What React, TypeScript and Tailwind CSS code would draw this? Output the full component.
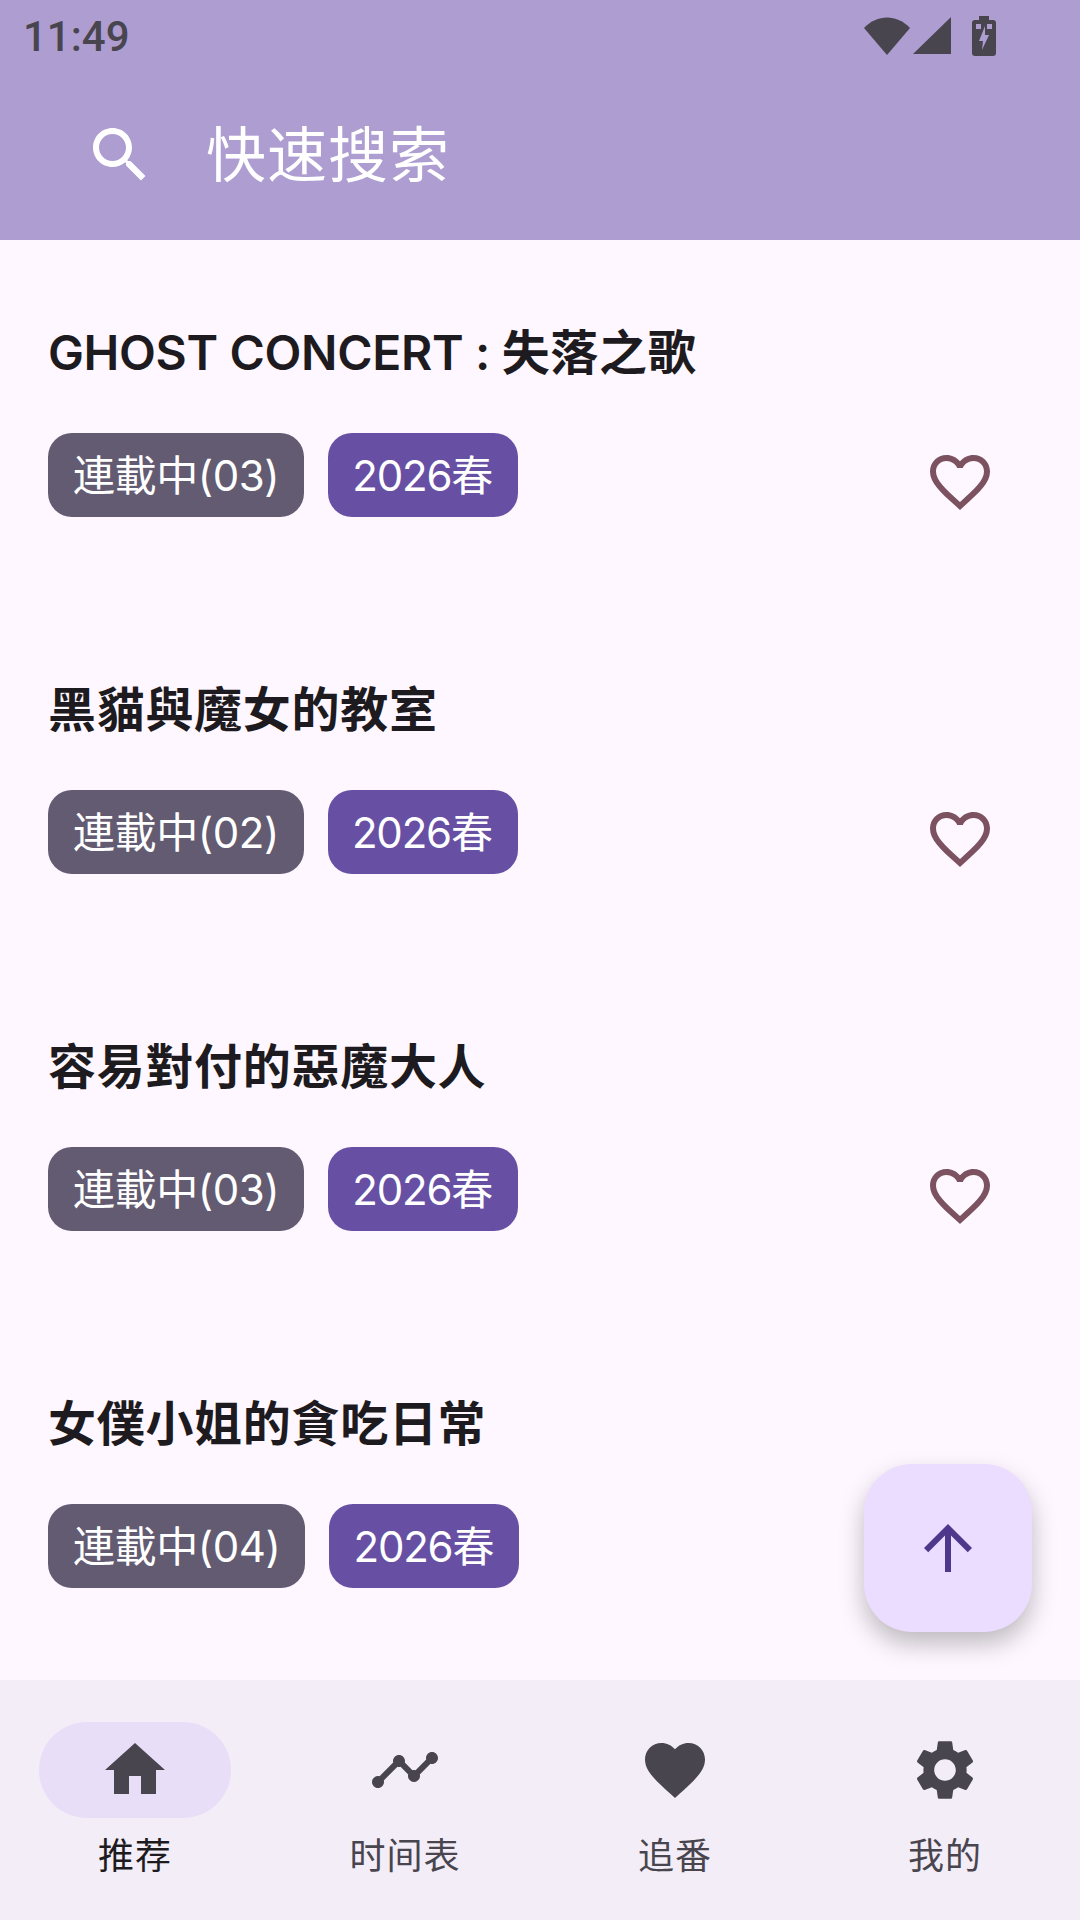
import React from 'react';

const ICONS = {
  search: "M15.5 14h-.79l-.28-.27C15.41 12.59 16 11.11 16 9.5 16 5.91 13.09 3 9.5 3S3 5.91 3 9.5 5.91 16 9.5 16c1.61 0 3.09-.59 4.23-1.57l.27.28v.79l5 4.99L20.49 19l-4.99-5zm-6 0C7.01 14 5 11.99 5 9.5S7.01 5 9.5 5 14 7.01 14 9.5 11.99 14 9.5 14z",
  favoriteBorder: "M16.5 3c-1.74 0-3.41.81-4.5 2.09C10.91 3.81 9.24 3 7.5 3 4.42 3 2 5.42 2 8.5c0 3.78 3.4 6.86 8.55 11.54L12 21.35l1.45-1.32C18.6 15.36 22 12.28 22 8.5 22 5.42 19.58 3 16.5 3zm-4.4 15.55l-.1.1-.1-.1C7.14 14.24 4 11.39 4 8.5 4 6.5 5.5 5 7.5 5c1.54 0 3.04.99 3.57 2.36h1.87C13.46 5.99 14.96 5 16.5 5c2 0 3.5 1.5 3.5 3.5 0 2.89-3.14 5.74-7.9 10.05z",
  favorite: "M12 21.35l-1.45-1.32C5.4 15.36 2 12.28 2 8.5 2 5.42 4.42 3 7.5 3c1.74 0 3.41.81 4.5 2.09C13.09 3.81 14.76 3 16.5 3 19.58 3 22 5.42 22 8.5c0 3.78-3.4 6.86-8.55 11.54L12 21.35z",
  home: "M10 20v-6h4v6h5v-8h3L12 3 2 12h3v8z",
  timeline: "M23 8c0 1.1-.9 2-2 2-.18 0-.35-.02-.51-.07l-3.56 3.55c.05.16.07.34.07.52 0 1.1-.9 2-2 2s-2-.9-2-2c0-.18.02-.36.07-.52l-2.55-2.55c-.16.05-.34.07-.52.07s-.36-.02-.52-.07l-4.55 4.56c.05.16.07.33.07.51 0 1.1-.9 2-2 2s-2-.9-2-2 .9-2 2-2c.18 0 .35.02.51.07l4.56-4.55C8.02 9.36 8 9.18 8 9c0-1.1.9-2 2-2s2 .9 2 2c0 .18-.02.36-.07.52l2.55 2.55c.16-.05.34-.07.52-.07s.36.02.52.07l3.55-3.56C19.02 8.35 19 8.18 19 8c0-1.1.9-2 2-2s2 .9 2 2z",
  settings: "M19.14 12.94c.04-.3.06-.61.06-.94 0-.32-.02-.64-.07-.94l2.03-1.58c.18-.14.23-.41.12-.61l-1.92-3.32c-.12-.22-.37-.29-.59-.22l-2.39.96c-.5-.38-1.03-.7-1.62-.94l-.36-2.54c-.04-.24-.24-.41-.48-.41h-3.84c-.24 0-.43.17-.47.41l-.36 2.54c-.59.24-1.13.57-1.62.94l-2.39-.96c-.22-.08-.47 0-.59.22L2.74 8.87c-.12.21-.08.47.12.61l2.03 1.58c-.05.3-.09.63-.09.94s.02.64.07.94l-2.03 1.58c-.18.14-.23.41-.12.61l1.92 3.32c.12.22.37.29.59.22l2.39-.96c.5.38 1.03.7 1.62.94l.36 2.54c.05.24.24.41.48.41h3.84c.24 0 .44-.17.47-.41l.36-2.54c.59-.24 1.13-.56 1.62-.94l2.39.96c.22.08.47 0 .59-.22l1.92-3.32c.12-.22.07-.47-.12-.61l-2.01-1.58zM12 15.6c-1.98 0-3.6-1.62-3.6-3.6s1.62-3.6 3.6-3.6 3.6 1.62 3.6 3.6-1.62 3.6-3.6 3.6z",
  arrowUp: "M4 12l1.41 1.41L11 7.83V20h2V7.83l5.58 5.59L20 12l-8-8-8 8z",
};

const Icon = ({ d, className }: { d: string; className: string }) => (
  <svg viewBox="0 0 24 24" fill="currentColor" className={className}>
    <path d={d} />
  </svg>
);

const StatusIcons = () => (
  <div className="flex items-center text-[#49454F]">
    <svg viewBox="0 0 46 38" className="w-[46px] h-[38px]" fill="currentColor">
      <path d="M0 11 C13 -3 33 -3 46 11 L23 38 Z" />
    </svg>
    <svg viewBox="0 0 38 38" className="w-[38px] h-[38px] ml-[3px]" fill="currentColor">
      <path d="M38 0 V37 H0 Z" />
    </svg>
    <svg viewBox="0 0 24 40" className="w-[24px] h-[40px] ml-[21px]" fill="currentColor">
      <path fillRule="evenodd" d="M7 0 H17 V4 H21 Q24 4 24 7 V37 Q24 40 21 40 H3 Q0 40 0 37 V7 Q0 4 3 4 H7 Z M4 8 V13 H9 V8 Z M15 8 V13 H20 V8 Z M13 10 L7 25 H11 L10 34 L17 19 H13 Z" />
    </svg>
  </div>
);

const animeList = [
  { latin: 'GHOST CONCERT : ', title: '失落之歌', status: '連載中(03)' },
  { latin: '', title: '黑貓與魔女的教室', status: '連載中(02)' },
  { latin: '', title: '容易對付的惡魔大人', status: '連載中(03)' },
  { latin: '', title: '女僕小姐的貪吃日常', status: '連載中(04)' },
];

const navItems = [
  { label: '推荐', icon: ICONS.home, active: true },
  { label: '时间表', icon: ICONS.timeline, active: false },
  { label: '追番', icon: ICONS.favorite, active: false },
  { label: '我的', icon: ICONS.settings, active: false },
];

const Chip = ({ text, className }: { text: string; className: string }) => (
  <span className={`flex items-center h-[84px] rounded-[24px] text-[42px] text-white ${className}`}>
    {text}
  </span>
);

export default function App() {
  return (
    <div
      className="relative w-[1080px] h-[1920px] flex flex-col overflow-hidden bg-[#FEF7FF]"
      style={{ fontFamily: 'Inter, "Noto Sans CJK SC", sans-serif' }}
    >
      <header className="h-[240px] bg-[#AD9DD1] flex flex-col">
        <div className="h-[72px] flex items-center justify-between pl-[23px] pr-[84px]">
          <span className="text-[42px] font-medium text-[#49454F] font-['Roboto']">11:49</span>
          <StatusIcons />
        </div>
        <div className="flex items-center pl-[84px] mt-[38px]">
          <Icon d={ICONS.search} className="w-[72px] h-[72px] text-white" />
          <span className="ml-[50px] text-[60px] tracking-[1px] text-white">快速搜索</span>
        </div>
      </header>

      <main className="flex-1">
        {animeList.map((anime) => (
          <div key={anime.title} className="h-[357px] pt-[85px] pl-[48px] pr-[84px]">
            <h2 className="h-[56px] text-[48px] leading-[56px] font-semibold tracking-[0.7px] text-[#1D1B20] whitespace-pre">
              {anime.latin && <span className="tracking-[-0.35px]">{anime.latin}</span>}
              {anime.title}
            </h2>
            <div className="mt-[51px] flex items-center justify-between">
              <div className="flex gap-[24px]">
                <Chip text={anime.status} className="px-[25px] bg-[#625B71] tracking-[-0.4px]" />
                <Chip text="2026春" className="pl-[24px] pr-[26px] bg-[#6750A4] tracking-[-1.2px]" />
              </div>
              <Icon d={ICONS.favoriteBorder} className="w-[72px] h-[72px] mt-[14px] text-[#7D5260]" />
            </div>
          </div>
        ))}
      </main>

      <button className="absolute left-[864px] top-[1464px] w-[168px] h-[168px] rounded-[48px] bg-[#EADDFF] flex items-center justify-center shadow-[0_12px_24px_rgba(0,0,0,0.25)]">
        <Icon d={ICONS.arrowUp} className="w-[72px] h-[72px] text-[#4F378B]" />
      </button>

      <nav className="h-[240px] bg-[#F3EDF7] grid grid-cols-4 pt-[42px]">
        {navItems.map((item) => (
          <div key={item.label} className="flex flex-col items-center">
            <div className={`w-[192px] h-[96px] rounded-[48px] flex items-center justify-center ${item.active ? 'bg-[#E8DEF8]' : ''}`}>
              <Icon d={item.icon} className="w-[72px] h-[72px] text-[#49454F]" />
            </div>
            <span className={`mt-[11px] text-[36px] tracking-[1px] ${item.active ? 'text-[#1D1B20]' : 'text-[#49454F]'}`}>
              {item.label}
            </span>
          </div>
        ))}
      </nav>
    </div>
  );
}
